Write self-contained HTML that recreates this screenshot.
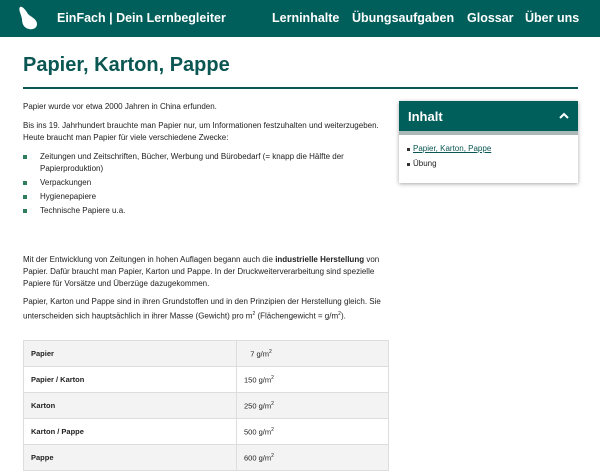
<!DOCTYPE html>
<html><head><meta charset="utf-8"><style>
*{margin:0;padding:0;box-sizing:border-box}
body{width:600px;height:465px;overflow:hidden;background:#fff;font-family:"Liberation Sans",sans-serif;color:#222;position:relative}
.hdr{position:absolute;left:0;top:0;width:600px;height:37px;background:#015f5b;color:#fff;font-weight:bold}
.hdr span{position:absolute;top:11px;font-size:12.5px;white-space:nowrap}
h1{position:absolute;left:23px;top:54px;font-size:20px;color:#0a5652;font-weight:bold;white-space:nowrap}
.rule{position:absolute;left:23px;top:87px;width:555px;height:2px;background:#0a5652}
.t{position:absolute;left:23px;font-size:8px;line-height:12px;color:#222;white-space:nowrap}
.b{position:absolute;left:23px;width:4px;height:4px;background:#2e7d5b}
.li{left:40px}
table{position:absolute;left:23px;top:340px;width:366px;border-collapse:collapse;font-size:7.5px}
td{border:1px solid #ddd;height:26px;padding:0 7px}
td:first-child{font-weight:bold;width:213px}
tr:nth-child(odd){background:#f3f3f3}
sup{font-size:5px}
.box{position:absolute;left:399px;top:101px;width:179px;height:82px;box-shadow:0 1px 4px rgba(0,0,0,.35);background:#fff}
.bh{background:#015f5b;color:#fff;font-weight:bold;font-size:13px;padding:8px 9px;border-bottom:4px solid #aab8b8;height:34px}
</style></head><body>
<div class="hdr">
<svg style="position:absolute;left:17px;top:5px" width="22" height="26" viewBox="0 0 22 26"><path d="M3 2 C5 1 8 4 11 9 C14 12 20 14 20 19 C20 23 16 25 12 24 C7 23 5 19 5 14 C4 9 1 4 3 2Z" fill="#fff"/></svg>
<span style="left:57px">EinFach | Dein Lernbegleiter</span>
<span style="left:272px">Lerninhalte</span>
<span style="left:352px">Übungsaufgaben</span>
<span style="left:467px">Glossar</span>
<span style="left:525px">Über uns</span>
</div>
<h1>Papier, Karton, Pappe</h1>
<div class="rule"></div>
<div class="t" style="top:101px">Papier wurde vor etwa 2000 Jahren in China erfunden.</div>
<div class="t" style="top:120px">Bis ins 19. Jahrhundert brauchte man Papier nur, um Informationen festzuhalten und weiterzugeben.<br>Heute braucht man Papier für viele verschiedene Zwecke:</div>
<div class="b" style="top:155px"></div><div class="t li" style="top:151px">Zeitungen und Zeitschriften, Bücher, Werbung und Bürobedarf (= knapp die Hälfte der<br>Papierproduktion)</div>
<div class="b" style="top:181px"></div><div class="t li" style="top:177px">Verpackungen</div>
<div class="b" style="top:195px"></div><div class="t li" style="top:191px">Hygienepapiere</div>
<div class="b" style="top:209px"></div><div class="t li" style="top:205px">Technische Papiere u.a.</div>
<div class="t" style="top:254px">Mit der Entwicklung von Zeitungen in hohen Auflagen begann auch die <b>industrielle Herstellung</b> von<br>Papier. Dafür braucht man Papier, Karton und Pappe. In der Druckweiterverarbeitung sind spezielle<br>Papiere für Vorsätze und Überzüge dazugekommen.</div>
<div class="t" style="top:296px">Papier, Karton und Pappe sind in ihren Grundstoffen und in den Prinzipien der Herstellung gleich. Sie<br>unterscheiden sich hauptsächlich in ihrer Masse (Gewicht) pro m<sup>2</sup> (Flächengewicht = g/m<sup>2</sup>).</div>
<table>
<tr><td>Papier</td><td>&nbsp;&nbsp;&nbsp;7 g/m<sup>2</sup></td></tr>
<tr><td>Papier / Karton</td><td>150 g/m<sup>2</sup></td></tr>
<tr><td>Karton</td><td>250 g/m<sup>2</sup></td></tr>
<tr><td>Karton / Pappe</td><td>500 g/m<sup>2</sup></td></tr>
<tr><td>Pappe</td><td>600 g/m<sup>2</sup></td></tr>
</table>
<div class="box">
<div class="bh">Inhalt<svg style="position:absolute;right:9px;top:11px" width="10" height="7" viewBox="0 0 10 7"><path d="M1 6 L5 2 L9 6" stroke="#fff" stroke-width="2" fill="none"/></svg></div>
<div style="position:absolute;left:8px;top:47px;width:3px;height:3px;background:#333"></div>
<div style="position:absolute;left:14px;top:43px;font-size:8px;color:#0a5652;text-decoration:underline">Papier, Karton, Pappe</div>
<div style="position:absolute;left:8px;top:62px;width:3px;height:3px;background:#333"></div>
<div style="position:absolute;left:14px;top:58px;font-size:8px;color:#222">Übung</div>
</div>
</body></html>
